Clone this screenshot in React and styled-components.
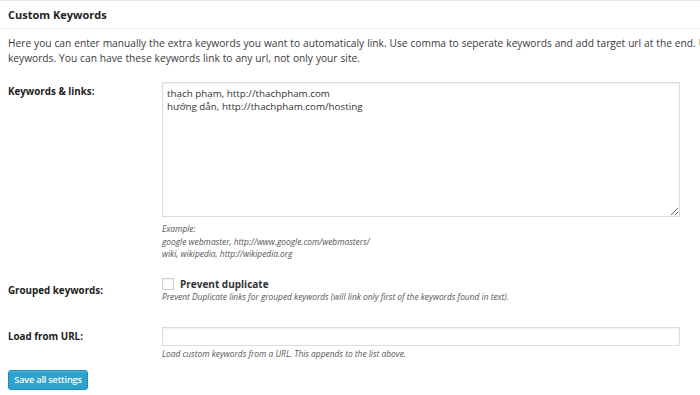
import React from 'react';
import styled, { createGlobalStyle } from 'styled-components';

const Global = createGlobalStyle`
  html, body {
    margin: 0;
    padding: 0;
    background: #fff;
    overflow: hidden;
  }
  body {
    font-family: "Open Sans", "Noto Sans", sans-serif;
    color: #333;
  }
`;

const Page = styled.div`
  width: 700px;
  height: 395px;
  overflow: hidden;
  border-top: 1px solid #e8e8e8;
  box-sizing: border-box;
`;

const Heading = styled.h3`
  margin: 0;
  padding: 6px 8px 6px;
  font-size: 11px;
  font-weight: 700;
  line-height: 15px;
  color: #222;
  border-bottom: 1px solid #eeeeee;
`;

const Intro = styled.p`
  margin: 7px 0 0 8px;
  white-space: nowrap;
  font-size: 10.2px;
  word-spacing: 0.3px;
  line-height: 15px;
  color: #3a3a3a;
`;

const Form = styled.div`
  display: grid;
  grid-template-columns: 154px 518px;
  padding: 0 8px;
  margin-top: 16px;
`;

const Label = styled.div`
  font-size: 9.8px;
  font-weight: 700;
  color: #222;
  padding-top: ${p => p.$top || 0}px;
  line-height: 15px;
`;

const Field = styled.div`
  display: flex;
  flex-direction: column;
  margin-bottom: ${p => p.$gap || 0}px;
`;

const TextArea = styled.textarea`
  display: block;
  width: 518px;
  height: 135px;
  box-sizing: border-box;
  border: 1px solid #dddddd;
  box-shadow: inset 0 1px 2px rgba(0, 0, 0, 0.07);
  padding: 4px 4px;
  font-family: "Open Sans", "Noto Sans", sans-serif;
  font-size: 9.8px;
  line-height: 13px;
  color: #333;
  resize: vertical;
  outline: none;
`;

const Input = styled.input`
  display: block;
  width: 518px;
  height: 19px;
  box-sizing: border-box;
  border: 1px solid #dddddd;
  box-shadow: inset 0 1px 2px rgba(0, 0, 0, 0.07);
  outline: none;
`;

const Note = styled.div`
  font-size: 8.4px;
  font-style: italic;
  line-height: 12.5px;
  color: #555;
  margin-top: ${p => p.$top || 0}px;
`;

const CheckRow = styled.label`
  display: flex;
  align-items: center;
  gap: 6px;
  font-size: 10px;
  font-weight: 700;
  color: #333;
  line-height: 13px;
`;

const Box = styled.span`
  width: 10px;
  height: 10px;
  border: 1px solid #cfcfcf;
  box-shadow: inset 0 1px 2px rgba(0, 0, 0, 0.08);
  background: #fff;
`;

const Button = styled.button`
  display: block;
  margin: 9px 0 0 8px;
  width: 80px;
  height: 20px;
  padding: 0;
  background: #2ea2cc;
  border: 1px solid #1e8cbe;
  border-radius: 3px;
  box-shadow: inset 0 1px 0 rgba(120, 200, 230, 0.5);
  color: #fff;
  font-family: "Open Sans", "Noto Sans", sans-serif;
  font-size: 9.2px;
  font-weight: 600;
  letter-spacing: -0.2px;
  line-height: 18px;
  cursor: pointer;
`;

export default function App() {
  return (
    <Page>
      <Global />
      <Heading>Custom Keywords</Heading>
      <Intro>
        Here you can enter manually the extra keywords you want to automaticaly link. Use comma to seperate keywords and add target url at the end. Use a new line for new url and new set of
        <br />
        keywords. You can have these keywords link to any url, not only your site.
      </Intro>
      <Form>
        <Label $top={2}>Keywords &amp; links:</Label>
        <Field $gap={17}>
          <TextArea
            defaultValue={'thạch phạm, http://thachpham.com\nhướng dẫn, http://thachpham.com/hosting'}
          />
          <Note $top={6}>
            Example:<br />
            google webmaster, http://www.google.com/webmasters/<br />
            wiki, wikipedia, http://wikipedia.org
          </Note>
        </Field>

        <Label $top={5}>Grouped keywords:</Label>
        <Field $gap={24}>
          <CheckRow>
            <Box />
            Prevent duplicate
          </CheckRow>
          <Note>
            Prevent Duplicate links for grouped keywords (will link only first of the keywords found in text).
          </Note>
        </Field>

        <Label $top={2}>Load from URL:</Label>
        <Field>
          <Input />
          <Note $top={2}>Load custom keywords from a URL. This appends to the list above.</Note>
        </Field>
      </Form>
      <Button>Save all settings</Button>
    </Page>
  );
}
